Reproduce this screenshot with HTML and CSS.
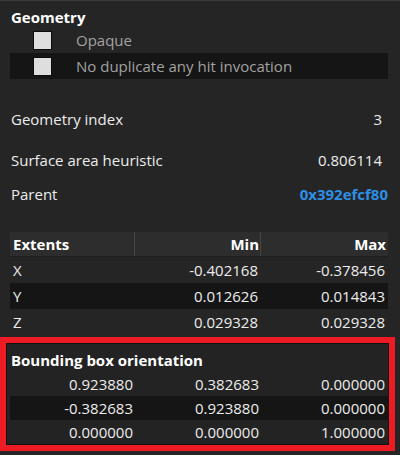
FILE: index.html
```html
<!DOCTYPE html>
<html>
<head>
<meta charset="utf-8">
<link rel="stylesheet" href="styles.css">
</head>
<body>
<div class="panel">
  <div class="title">Geometry</div>
  <div class="check-row"><span class="box"></span><span class="check-label">Opaque</span></div>
  <div class="check-row alt"><span class="box"></span><span class="check-label">No duplicate any hit invocation</span></div>

  <div class="prop first"><span>Geometry index</span><span>3</span></div>
  <div class="prop second"><span>Surface area heuristic</span><span>0.806114</span></div>
  <div class="prop third"><span>Parent</span><span class="link">0x392efcf80</span></div>

  <div class="table">
    <div class="thead">
      <div class="th left">Extents</div>
      <div class="th">Min</div>
      <div class="th last">Max</div>
    </div>
    <div class="tr"><div class="td left">X</div><div class="td">-0.402168</div><div class="td">-0.378456</div></div>
    <div class="tr alt"><div class="td left">Y</div><div class="td">0.012626</div><div class="td">0.014843</div></div>
    <div class="tr"><div class="td left">Z</div><div class="td">0.029328</div><div class="td">0.029328</div></div>
  </div>
</div>

<div class="highlight">
  <div class="inner">
    <div class="sub-title">Bounding box orientation</div>
    <div class="orow"><div class="oc">0.923880</div><div class="oc">0.382683</div><div class="oc">0.000000</div></div>
    <div class="orow alt"><div class="oc">-0.382683</div><div class="oc">0.923880</div><div class="oc">0.000000</div></div>
    <div class="orow"><div class="oc">0.000000</div><div class="oc">0.000000</div><div class="oc">1.000000</div></div>
  </div>
</div>
</body>
</html>
```

FILE: styles.css
```css
html, body {
  margin: 0;
  padding: 0;
}
body {
  width: 400px;
  height: 455px;
  background: #252525;
  border-top: 1px solid #3a3a3a;
  box-sizing: border-box;
  font-family: "Open Sans", "Noto Sans", sans-serif;
  font-size: 15px;
  color: #ececec;
  overflow: hidden;
}
.panel {
  padding: 0 12px 0 10px;
}
.title {
  font-weight: 700;
  color: #ffffff;
  height: 20px;
  line-height: 20px;
  margin-top: 6px;
  padding-left: 1px;
}
.check-row {
  display: flex;
  align-items: center;
  height: 26px;
}
.alt {
  background: #151515;
}
.box {
  width: 17px;
  height: 17px;
  background: #dedede;
  border: 1px solid #0c0c0c;
  margin-left: 23px;
}
.check-label {
  margin-left: 24px;
  color: #a2a2a2;
}
.prop {
  display: flex;
  justify-content: space-between;
  align-items: center;
  height: 26px;
  padding: 0 6px 0 1px;
}
.prop.first { margin-top: 27px; }
.prop.second { margin-top: 15px; }
.prop.third { margin-top: 8px; padding-right: 0; }
.link {
  color: #2d8fe6;
  font-weight: 700;
}
.table {
  margin-top: 25px;
}
.thead {
  display: grid;
  grid-template-columns: 125px 126px 1fr;
  height: 25px;
  background: #2d2d2d;
  border-bottom: 1px solid #1e1e1e;
  box-sizing: border-box;
}
.th {
  font-weight: 700;
  color: #ffffff;
  text-align: right;
  line-height: 24px;
  padding-right: 1px;
  border-right: 1px solid #464646;
}
.th.last {
  border-right: none;
  padding-right: 2px;
}
.th.left {
  text-align: left;
  padding-left: 3px;
}
.tr {
  display: grid;
  grid-template-columns: 125px 126px 1fr;
  height: 26px;
  line-height: 26px;
}
.td {
  text-align: right;
  padding-right: 3px;
}
.td.left {
  text-align: left;
  padding-left: 3px;
}
.highlight {
  margin-top: 2px;
  width: 395px;
  box-sizing: border-box;
  border: 6px solid #ed1c24;
}
.inner {
  border: 1px solid #111111;
  padding: 4px 0 0 3px;
  background: #232323;
}
.sub-title {
  font-weight: 700;
  color: #ffffff;
  height: 24px;
  line-height: 24px;
  padding-left: 1px;
}
.orow {
  display: grid;
  grid-template-columns: 126px 126px 126px;
  height: 24px;
  line-height: 24px;
}
.oc {
  text-align: right;
  padding-right: 3px;
}
```
